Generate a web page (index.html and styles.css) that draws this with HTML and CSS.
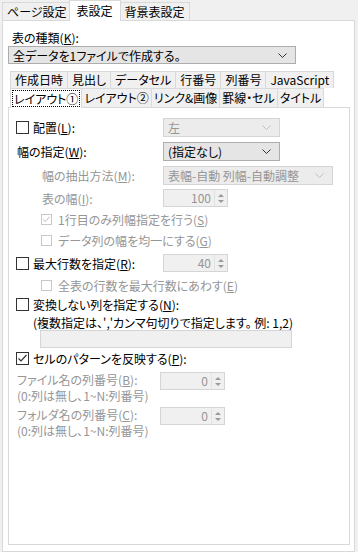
FILE: index.html
```html
<!DOCTYPE html>
<html lang="ja">

<head>
    <meta charset="UTF-8">
    <meta name="viewport" content="width=device-width, initial-scale=1.0">
    <title>表設定</title>
    <link rel="stylesheet" href="styles.css">
</head>

<body>
    <div class="window">
        <div class="top-tabs">
            <div class="tab">ページ設定</div>
            <div class="tab active">表設定</div>
            <div class="tab">背景表設定</div>
        </div>

        <div class="panel">
            <div class="kind-label">表の種類(<u>K</u>):</div>
            <div class="combo kind-combo">
                <span>全データを1ファイルで作成する。</span>
                <svg class="chev" width="9" height="5" viewBox="0 0 9 5"><path d="M0.5 0.5 L4.5 4.5 L8.5 0.5" /></svg>
            </div>

            <div class="sub-tabs">
                <div class="tab-row">
                    <div class="stab">作成日時</div>
                    <div class="stab">見出し</div>
                    <div class="stab">データセル</div>
                    <div class="stab">行番号</div>
                    <div class="stab">列番号</div>
                    <div class="stab">JavaScript</div>
                </div>
                <div class="tab-row front">
                    <div class="stab active"><span class="focus">レイアウト①</span></div>
                    <div class="stab">レイアウト②</div>
                    <div class="stab">リンク&amp;画像</div>
                    <div class="stab">罫線・セル</div>
                    <div class="stab">タイトル</div>
                </div>
            </div>

            <div class="sub-panel">
                <div class="row h24">
                    <div class="lbl"><span class="cb"></span>配置(<u>L</u>):</div>
                    <div class="combo off w117">
                        <span>左</span>
                        <svg class="chev" width="9" height="5" viewBox="0 0 9 5"><path d="M0.5 0.5 L4.5 4.5 L8.5 0.5" /></svg>
                    </div>
                </div>
                <div class="row h24">
                    <div class="lbl plain">幅の指定(<u>W</u>):</div>
                    <div class="combo w117">
                        <span>(指定なし)</span>
                        <svg class="chev" width="9" height="5" viewBox="0 0 9 5"><path d="M0.5 0.5 L4.5 4.5 L8.5 0.5" /></svg>
                    </div>
                </div>
                <div class="row h24">
                    <div class="lbl indent dim">幅の抽出方法(<u>M</u>):</div>
                    <div class="combo off w170">
                        <span>表幅-自動 列幅-自動調整</span>
                        <svg class="chev" width="9" height="5" viewBox="0 0 9 5"><path d="M0.5 0.5 L4.5 4.5 L8.5 0.5" /></svg>
                    </div>
                </div>
                <div class="row h22">
                    <div class="lbl indent dim">表の幅(<u>I</u>):</div>
                    <div class="spin">
                        <span class="val">100</span>
                        <span class="arrows"><i class="up"></i><i class="down"></i></span>
                    </div>
                </div>
                <div class="row h21 sub dim">
                    <span class="cb off checked"><svg width="11" height="11" viewBox="0 0 11 11"><path d="M1.5 5.5 L4 8 L9.5 2" /></svg></span>1行目のみ列幅指定を行う(<u>S</u>)
                </div>
                <div class="row h21 sub dim">
                    <span class="cb off"></span>データ列の幅を均一にする(<u>G</u>)
                </div>
                <div class="row h24">
                    <div class="lbl"><span class="cb"></span>最大行数を指定(<u>R</u>):</div>
                    <div class="spin">
                        <span class="val">40</span>
                        <span class="arrows"><i class="up"></i><i class="down"></i></span>
                    </div>
                </div>
                <div class="row h20 sub dim">
                    <span class="cb off"></span>全表の行数を最大行数にあわす(<u>E</u>)
                </div>
                <div class="row h19">
                    <span class="cb"></span>変換しない列を指定する(<u>N</u>):
                </div>
                <div class="row h16 note">(複数指定は、','カンマ句切りで指定します。 例: 1,2)</div>
                <div class="text-input"></div>
                <div class="row h20">
                    <span class="cb checked"><svg width="11" height="11" viewBox="0 0 11 11"><path d="M1.5 5.5 L4 8 L9.5 2" /></svg></span>セルのパターンを反映する(<u>P</u>):
                </div>
                <div class="num-row">
                    <div class="lbl2 dim">ファイル名の列番号(<u>B</u>):<br>(0:列は無し、1~N:列番号)</div>
                    <div class="spin">
                        <span class="val">0</span>
                        <span class="arrows"><i class="up"></i><i class="down"></i></span>
                    </div>
                </div>
                <div class="num-row second">
                    <div class="lbl2 dim">フォルダ名の列番号(<u>C</u>):<br>(0:列は無し、1~N:列番号)</div>
                    <div class="spin">
                        <span class="val">0</span>
                        <span class="arrows"><i class="up"></i><i class="down"></i></span>
                    </div>
                </div>
            </div>
        </div>
    </div>
</body>

</html>
```

FILE: styles.css
```css
* {
    margin: 0;
    padding: 0;
    box-sizing: border-box;
}

body {
    background-color: #f0f0f0;
    font-family: "Noto Sans CJK JP", "Liberation Sans", sans-serif;
    font-size: 12px;
    font-feature-settings: "palt";
    color: #000;
    width: 358px;
    height: 552px;
    overflow: hidden;
}

u {
    text-decoration-thickness: 1px;
    text-underline-offset: 1px;
}

.window {
    display: flex;
    flex-direction: column;
    height: 552px;
    padding: 0 3px 0 2px;
}

/* top tabs */
.top-tabs {
    display: flex;
    align-items: flex-end;
    height: 20px;
}

.tab {
    height: 18px;
    line-height: 17px;
    padding: 0 4px;
    border: 1px solid #d9d9d9;
    border-bottom: none;
    background-color: #f0f0f0;
    margin-right: -1px;
}

.tab.active {
    height: 21px;
    line-height: 20px;
    padding: 0 7px;
    margin: 0 -1px -1px -2px;
    background-color: #fff;
    position: relative;
    z-index: 1;
}

.panel {
    flex: 1;
    display: flex;
    flex-direction: column;
    background-color: #fff;
    border: 1px solid #d9d9d9;
    padding: 9px 4px 6px 5px;
}

.kind-label {
    padding-left: 4px;
    height: 15px;
    line-height: 15px;
}

/* combo boxes */
.combo {
    display: flex;
    align-items: center;
    justify-content: space-between;
    height: 19px;
    border: 1px solid #adadad;
    background-color: #e5e5e5;
    padding: 0 8px 0 4px;
}

.combo .chev {
    fill: none;
    stroke: #333;
    stroke-width: 1;
}

.combo.off {
    border-color: #d5d5d5;
    background-color: #ececec;
    color: #969696;
}

.combo.off .chev {
    stroke: #c0c0c0;
}

.kind-combo {
    width: 288px;
    height: 18px;
    margin-top: 1px;
}

.w117 {
    width: 117px;
}

.w170 {
    width: 170px;
}

/* inner tabs */
.sub-tabs {
    margin-top: 7px;
    padding-left: 2px;
}

.tab-row {
    display: flex;
    height: 17px;
}

.tab-row.front {
    height: 19px;
}

.stab {
    height: 17px;
    line-height: 16px;
    padding: 0 4px;
    border: 1px solid #d9d9d9;
    border-bottom: none;
    background-color: #f0f0f0;
    margin-right: -1px;
    white-space: nowrap;
}

.front .stab {
    height: 19px;
    line-height: 18px;
    padding: 0 2px;
}

.front .stab.active {
    background-color: #fff;
    padding: 0 1px;
    position: relative;
    z-index: 1;
    margin-bottom: -1px;
    height: 20px;
}

.focus {
    display: inline-block;
    border: 1px dotted #000;
    line-height: 15px;
    padding: 0 1px;
    margin-top: 1px;
}

/* inner panel */
.sub-panel {
    flex: 1;
    border: 1px solid #d9d9d9;
    padding: 7px 7px 0 7px;
}

.row {
    display: flex;
    align-items: center;
    white-space: nowrap;
}

.h24 { height: 24px; }
.h22 { height: 22px; }
.h21 { height: 21px; }
.h20 { height: 20px; }
.h19 { height: 19px; }
.h16 { height: 16px; }

.lbl {
    width: 147px;
    flex: none;
    display: flex;
    align-items: center;
}

.lbl.plain {
    padding-left: 1px;
}

.lbl.indent {
    padding-left: 26px;
}

.sub {
    padding-left: 24px;
}

.dim {
    color: #969696;
}

.note {
    padding-left: 17px;
}

/* check boxes */
.cb {
    width: 13px;
    height: 13px;
    border: 1px solid #333;
    background-color: #fff;
    margin-right: 4px;
    flex: none;
    display: flex;
    align-items: center;
    justify-content: center;
}

.cb svg path {
    fill: none;
    stroke: #333;
    stroke-width: 1.2;
}

.cb.off {
    border-color: #c8c8c8;
    width: 11px;
    height: 11px;
    margin-left: 1px;
    margin-right: 6px;
}

.cb.off svg path {
    stroke: #b8b8b8;
}

/* spin boxes */
.spin {
    display: flex;
    width: 65px;
    height: 18px;
    border: 1px solid #d5d5d5;
    background-color: #f0f0f0;
    color: #969696;
}

.spin .val {
    flex: 1;
    text-align: right;
    line-height: 16px;
    padding-right: 3px;
}

.arrows {
    width: 13px;
    display: flex;
    flex-direction: column;
    justify-content: center;
    align-items: center;
    gap: 3px;
    border-left: 1px solid #e2e2e2;
}

.arrows i {
    width: 0;
    height: 0;
    border-left: 3px solid transparent;
    border-right: 3px solid transparent;
}

.arrows .up {
    border-bottom: 3px solid #9a9a9a;
}

.arrows .down {
    border-top: 3px solid #9a9a9a;
}

.text-input {
    width: 252px;
    height: 18px;
    margin-left: 24px;
    border: 1px solid #d5d5d5;
    background-color: #f0f0f0;
}

.num-row {
    display: flex;
    align-items: flex-start;
    margin-top: 4px;
}

.num-row.second {
    margin-top: 3px;
}

.lbl2 {
    width: 144px;
    line-height: 16px;
    padding-left: 1px;
    white-space: nowrap;
}
```
